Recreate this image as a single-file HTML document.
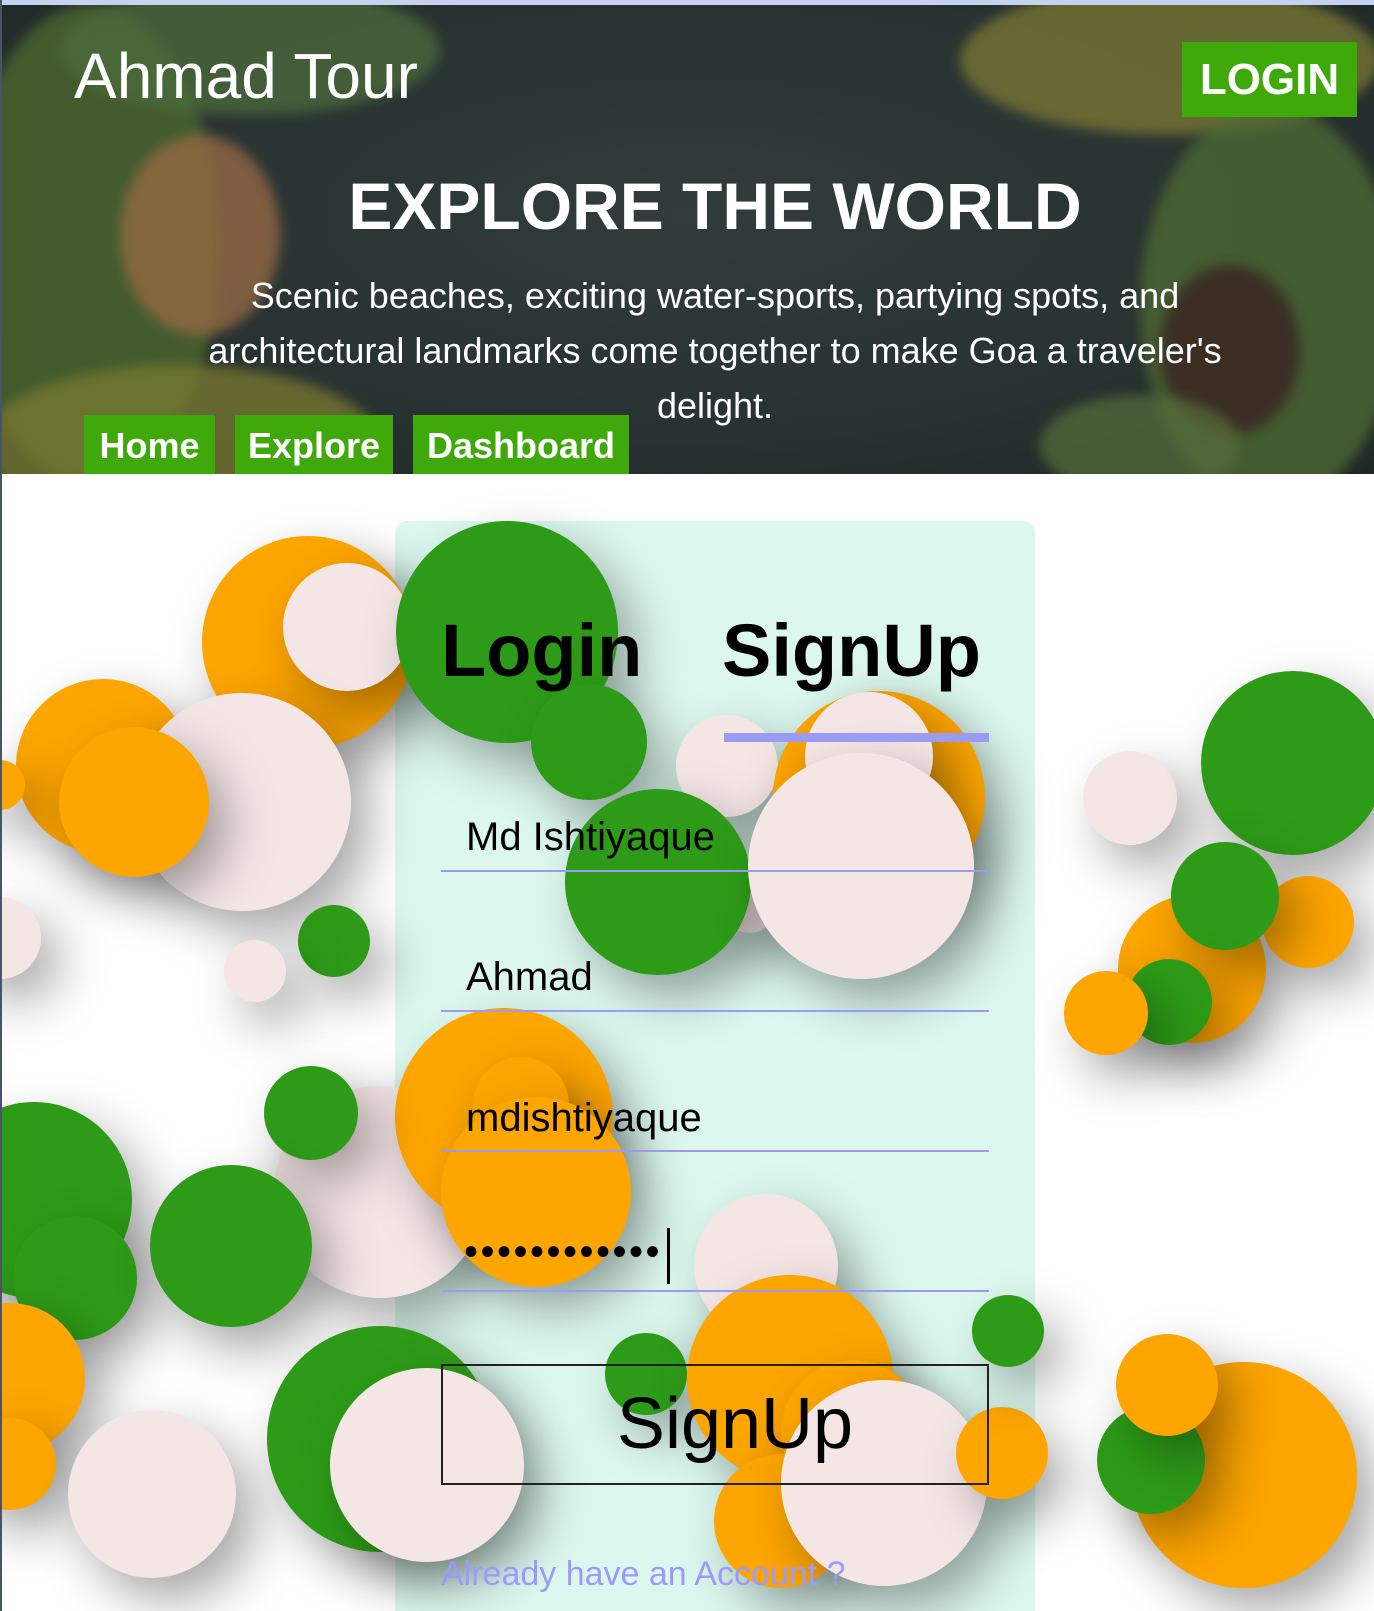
<!DOCTYPE html>
<html><head><meta charset="utf-8"><style>
*{margin:0;padding:0;box-sizing:border-box}
html,body{width:1374px;height:1611px;overflow:hidden;background:#fff;font-family:"Liberation Sans",sans-serif;position:relative}
.lb{position:absolute;left:0;top:0;width:2px;height:1611px;background:#4a5563;z-index:50}
.top{position:absolute;left:0;top:0;width:1374px;height:5px;background:#c5d3ee;z-index:40}
header{position:absolute;left:0;top:5px;width:1374px;height:469px;overflow:hidden;
background:radial-gradient(ellipse at 50% 45%,#313c3b 0%,#283230 60%,#1f2826 100%);z-index:30}
.leaf{position:absolute;border-radius:50%;filter:blur(6px);opacity:.75}
h1{position:absolute;left:74px;top:34px;font-size:64px;color:#fff;font-weight:normal}
.login{position:absolute;left:1182px;top:37px;width:175px;height:75px;background:#3fa80a;color:#fff;font-size:44px;font-weight:bold;text-align:center;line-height:75px}
h2{position:absolute;left:0;width:1430px;top:163px;text-align:center;font-size:66px;color:#fff;font-weight:bold}
.p{position:absolute;left:160px;width:1110px;top:263px;text-align:center;font-size:36px;line-height:55px;color:#fff}
.nav{position:absolute;top:410px;height:59px;background:#3fa80a;color:#fff;font-size:36px;font-weight:bold;text-align:center;line-height:62px}
.card{position:absolute;left:395px;top:521px;width:640px;height:1100px;background:#dcf8ee;border-radius:12px;z-index:1}
.c{position:absolute;border-radius:50%;box-shadow:18px 22px 50px rgba(0,0,0,.35);z-index:2}
.g{background:#2d9b17}.o{background:#fda500}.k{background:#f5e6e6}
.f{position:absolute;z-index:5;color:#000}
.line{position:absolute;left:441px;width:548px;height:2px;background:#9b9bf2;z-index:5}
</style></head><body>
<div class="top"></div><div class="lb"></div>
<header>
<div class="leaf" style="left:-40px;top:0;width:260px;height:480px;background:#4e6a2e"></div>
<div class="leaf" style="left:60px;top:-20px;width:380px;height:130px;background:#4c6b3c"></div>
<div class="leaf" style="left:120px;top:130px;width:160px;height:200px;background:#9a6b45"></div>
<div class="leaf" style="left:-20px;top:360px;width:400px;height:160px;background:#7a7a30"></div>
<div class="leaf" style="left:960px;top:-20px;width:420px;height:150px;background:#7d7a35"></div>
<div class="leaf" style="left:1140px;top:100px;width:260px;height:400px;background:#4e6b33"></div>
<div class="leaf" style="left:1160px;top:260px;width:140px;height:170px;background:#3a2a24;opacity:.9"></div>
<div class="leaf" style="left:1040px;top:390px;width:200px;height:100px;background:#566b3a"></div>
<h1>Ahmad Tour</h1>
<div class="login">LOGIN</div>
<h2>EXPLORE THE WORLD</h2>
<div class="p">Scenic beaches, exciting water-sports, partying spots, and architectural landmarks come together to make Goa a traveler's delight.</div>
<div class="nav" style="left:84px;width:131px">Home</div>
<div class="nav" style="left:235px;width:158px">Explore</div>
<div class="nav" style="left:413px;width:216px">Dashboard</div>
</header>
<div class="card"></div>
<div class="c o" style="left:202px;top:536px;width:212px;height:212px"></div>
<div class="c k" style="left:283px;top:563px;width:128px;height:128px"></div>
<div class="c g" style="left:396px;top:521px;width:222px;height:222px"></div>
<div class="c o" style="left:16px;top:679px;width:174px;height:174px"></div>
<div class="c o" style="left:-25px;top:760px;width:50px;height:50px"></div>
<div class="c k" style="left:133px;top:693px;width:218px;height:218px"></div>
<div class="c o" style="left:59px;top:727px;width:150px;height:150px"></div>
<div class="c k" style="left:-41px;top:897px;width:82px;height:82px"></div>
<div class="c g" style="left:298px;top:905px;width:72px;height:72px"></div>
<div class="c k" style="left:224px;top:940px;width:62px;height:62px"></div>
<div class="c g" style="left:531px;top:684px;width:116px;height:116px"></div>
<div class="c k" style="left:676px;top:715px;width:102px;height:102px"></div>
<div class="c o" style="left:773px;top:691px;width:212px;height:212px"></div>
<div class="c k" style="left:805px;top:692px;width:128px;height:128px"></div>
<div class="c k" style="left:720px;top:875px;width:58px;height:58px"></div>
<div class="c g" style="left:565px;top:789px;width:186px;height:186px"></div>
<div class="c k" style="left:748px;top:753px;width:226px;height:226px"></div>
<div class="c k" style="left:1083px;top:751px;width:94px;height:94px"></div>
<div class="c g" style="left:1201px;top:671px;width:184px;height:184px"></div>
<div class="c o" style="left:1118px;top:895px;width:148px;height:148px"></div>
<div class="c o" style="left:1262px;top:876px;width:92px;height:92px"></div>
<div class="c g" style="left:1171px;top:842px;width:108px;height:108px"></div>
<div class="c g" style="left:1126px;top:959px;width:86px;height:86px"></div>
<div class="c o" style="left:1064px;top:971px;width:84px;height:84px"></div>
<div class="c k" style="left:274px;top:1086px;width:212px;height:212px"></div>
<div class="c o" style="left:395px;top:1008px;width:218px;height:218px"></div>
<div class="c o" style="left:473px;top:1057px;width:96px;height:96px"></div>
<div class="c o" style="left:441px;top:1097px;width:190px;height:190px"></div>
<div class="c g" style="left:264px;top:1066px;width:94px;height:94px"></div>
<div class="c g" style="left:-64px;top:1102px;width:196px;height:196px"></div>
<div class="c g" style="left:13px;top:1216px;width:124px;height:124px"></div>
<div class="c g" style="left:150px;top:1165px;width:162px;height:162px"></div>
<div class="c o" style="left:-65px;top:1303px;width:150px;height:150px"></div>
<div class="c o" style="left:-36px;top:1418px;width:92px;height:92px"></div>
<div class="c k" style="left:68px;top:1410px;width:168px;height:168px"></div>
<div class="c g" style="left:267px;top:1326px;width:226px;height:226px"></div>
<div class="c k" style="left:330px;top:1368px;width:194px;height:194px"></div>
<div class="c k" style="left:694px;top:1194px;width:144px;height:144px"></div>
<div class="c g" style="left:605px;top:1333px;width:82px;height:82px"></div>
<div class="c o" style="left:687px;top:1275px;width:206px;height:206px"></div>
<div class="c o" style="left:781px;top:1360px;width:144px;height:144px"></div>
<div class="c o" style="left:714px;top:1454px;width:134px;height:134px"></div>
<div class="c k" style="left:781px;top:1380px;width:206px;height:206px"></div>
<div class="c o" style="left:956px;top:1407px;width:92px;height:92px"></div>
<div class="c g" style="left:972px;top:1295px;width:72px;height:72px"></div>
<div class="c o" style="left:1131px;top:1362px;width:226px;height:226px"></div>
<div class="c g" style="left:1097px;top:1406px;width:108px;height:108px"></div>
<div class="c o" style="left:1116px;top:1334px;width:102px;height:102px"></div>
<div class="f" style="left:441px;top:608px;font-size:74px;font-weight:bold">Login</div>
<div class="f" style="left:722px;top:608px;font-size:74px;font-weight:bold">SignUp</div>
<div class="f" style="left:724px;top:733px;width:265px;height:9px;background:#9b9bf2"></div>
<div class="f" style="left:466px;top:815px;font-size:40px">Md Ishtiyaque</div>
<div class="line" style="top:870px"></div>
<div class="f" style="left:466px;top:955px;font-size:40px">Ahmad</div>
<div class="line" style="top:1010px"></div>
<div class="f" style="left:466px;top:1096px;font-size:40px">mdishtiyaque</div>
<div class="line" style="top:1150px"></div>
<div class="f" style="left:464px;top:1230px;font-size:40px;letter-spacing:2.5px">••••••••••••</div>
<div class="f" style="left:667px;top:1228px;width:3px;height:56px;background:#000"></div>
<div class="line" style="top:1290px"></div>
<div class="f" style="left:441px;top:1364px;width:548px;height:121px;border:2.5px solid #222;text-align:center;font-size:72px;line-height:116px;padding-left:40px">SignUp</div>
<div class="f" style="left:441px;top:1555px;font-size:34px;color:#9b9bff">Already have an Account ?</div>
</body></html>
